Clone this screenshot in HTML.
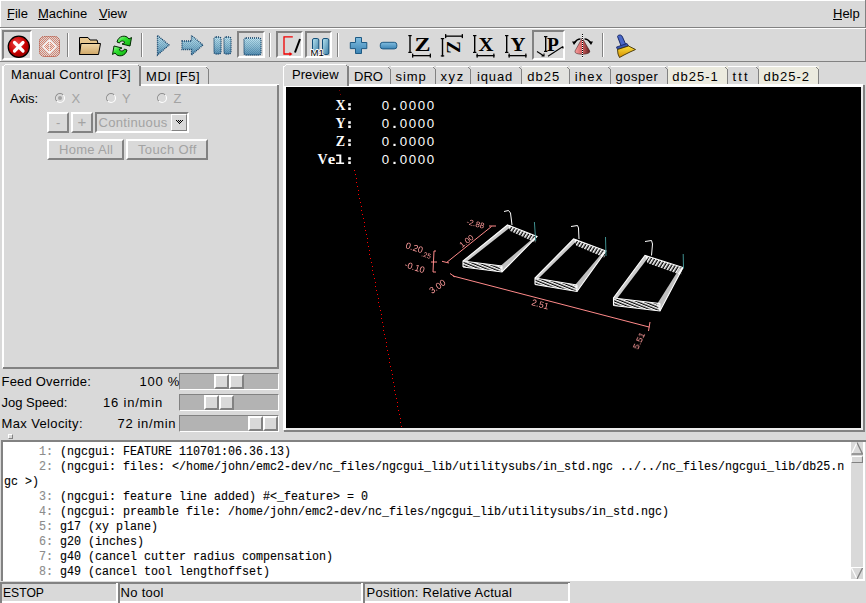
<!DOCTYPE html>
<html><head><meta charset="utf-8"><style>
*{margin:0;padding:0;box-sizing:border-box}
html,body{width:866px;height:603px;overflow:hidden;background:#d9d9d9}
body{position:relative;font-family:"Liberation Sans",sans-serif;font-size:13px;color:#000}
.a{position:absolute}
.t{position:absolute;white-space:pre;line-height:15px;height:15px}
.dk{background:#828282}
.wh{background:#ffffff}
.sunk{position:absolute;border-style:solid;border-width:2px;border-color:#828282 #fff #fff #828282}
.rais{position:absolute;border-style:solid;border-width:2px;border-color:#fff #828282 #828282 #fff}
.dis{color:#a3a3a3}
.mono{font-family:"Liberation Mono",monospace;font-size:12px;-webkit-text-stroke:0.12px;transform:scaleX(0.97222);transform-origin:0 0}
.ln{color:#8c8c8c}
</style></head><body>
<div class="a" style="left:0px;top:0px;width:866px;height:1px;background:#ffffff;"></div>
<div class="a" style="left:0px;top:0px;width:1px;height:27px;background:#ffffff;"></div>
<div class="a" style="left:865px;top:0px;width:1px;height:28px;background:#828282;"></div>
<div class="a" style="left:0px;top:27px;width:866px;height:1px;background:#828282;"></div>
<div class="t " style="left:7px;top:6px;">File</div>
<div class="a" style="left:7px;top:19px;width:7px;height:1px;background:#000;"></div>
<div class="t " style="left:38px;top:6px;">Machine</div>
<div class="a" style="left:38px;top:19px;width:10px;height:1px;background:#000;"></div>
<div class="t " style="left:99px;top:6px;">View</div>
<div class="a" style="left:99px;top:19px;width:8px;height:1px;background:#000;"></div>
<div class="t " style="left:833px;top:6px;">Help</div>
<div class="a" style="left:833px;top:19px;width:9px;height:1px;background:#000;"></div>
<div class="a" style="left:0px;top:28px;width:866px;height:1px;background:#ffffff;"></div>
<div class="a" style="left:0px;top:28px;width:1px;height:33px;background:#ffffff;"></div>
<div class="a" style="left:865px;top:29px;width:1px;height:33px;background:#828282;"></div>
<div class="a" style="left:0px;top:61px;width:866px;height:1px;background:#828282;"></div>
<div class="sunk" style="left:2px;top:30px;width:30px;height:30px"></div>
<div class="sunk" style="left:237px;top:31px;width:28px;height:27px"></div>
<div class="sunk" style="left:276px;top:31px;width:27px;height:27px"></div>
<div class="sunk" style="left:305px;top:31px;width:27px;height:27px"></div>
<div class="sunk" style="left:532px;top:30px;width:33px;height:30px"></div>
<svg class="a" style="left:0;top:0" width="866" height="62" viewBox="0 0 866 62">
<defs>
<radialGradient id="gred" cx="0.4" cy="0.35" r="0.7"><stop offset="0" stop-color="#f04848"/><stop offset="0.6" stop-color="#c80000"/><stop offset="1" stop-color="#8a0000"/></radialGradient>
<linearGradient id="gblue" x1="0" y1="0" x2="0" y2="1"><stop offset="0" stop-color="#c0e4f0"/><stop offset="0.5" stop-color="#90c0d6"/><stop offset="1" stop-color="#5890b4"/></linearGradient><pattern id="bchk" width="2" height="2" patternUnits="userSpaceOnUse"><rect width="1" height="1" fill="#1c5478" fill-opacity="0.25"/><rect x="1" y="1" width="1" height="1" fill="#1c5478" fill-opacity="0.25"/></pattern>
<linearGradient id="gbar" x1="0" y1="0" x2="1" y2="1"><stop offset="0" stop-color="#b8e4f0"/><stop offset="1" stop-color="#3a7ca4"/></linearGradient>
<linearGradient id="gplus" x1="0" y1="0" x2="0" y2="1"><stop offset="0" stop-color="#80bde0"/><stop offset="1" stop-color="#3c84b4"/></linearGradient>
<linearGradient id="gfold" x1="0" y1="0" x2="0" y2="1"><stop offset="0" stop-color="#f2d8a8"/><stop offset="1" stop-color="#d0a868"/></linearGradient>
<linearGradient id="ggreen" x1="0" y1="0" x2="1" y2="1"><stop offset="0" stop-color="#b0ffb0"/><stop offset="0.4" stop-color="#30e030"/><stop offset="1" stop-color="#10b010"/></linearGradient>
<linearGradient id="gcone" x1="0" y1="0" x2="1" y2="0"><stop offset="0" stop-color="#f8a0a0"/><stop offset="0.5" stop-color="#d06060"/><stop offset="1" stop-color="#602020"/></linearGradient>
<linearGradient id="gbrush" x1="0" y1="0" x2="0" y2="1"><stop offset="0" stop-color="#f8e040"/><stop offset="1" stop-color="#d89000"/></linearGradient>
<pattern id="dots" width="2" height="2" patternUnits="userSpaceOnUse"><rect width="1" height="1" fill="#d88470"/><rect x="1" y="1" width="1" height="1" fill="#d88470"/></pattern>
</defs>
<!-- separators -->
<g>
<rect x="67" y="33" width="1" height="24" fill="#828282"/><rect x="68" y="33" width="1" height="24" fill="#fff"/>
<rect x="141" y="33" width="1" height="24" fill="#828282"/><rect x="142" y="33" width="1" height="24" fill="#fff"/>
<rect x="269" y="33" width="1" height="24" fill="#828282"/><rect x="270" y="33" width="1" height="24" fill="#fff"/>
<rect x="337" y="33" width="1" height="24" fill="#828282"/><rect x="338" y="33" width="1" height="24" fill="#fff"/>
<rect x="602" y="33" width="1" height="24" fill="#828282"/><rect x="603" y="33" width="1" height="24" fill="#fff"/>
</g>
<!-- estop -->
<circle cx="18.8" cy="46.8" r="10.6" fill="url(#gred)" stroke="#000" stroke-width="1.2"/>
<path d="M14.5 42.5 L23 51 M23 42.5 L14.5 51" stroke="#fff" stroke-width="3.2" stroke-linecap="round"/>
<!-- power -->
<rect x="39" y="36" width="21" height="21" rx="5" fill="url(#dots)"/>
<rect x="39.5" y="36.5" width="20" height="20" rx="5" fill="none" stroke="#b05848" stroke-width="1" stroke-dasharray="1 1"/>
<path d="M49.5 40 L56 46.5 L49.5 53 L43 46.5 Z" fill="none" stroke="#fff" stroke-width="1.3" opacity="0.9"/>
<path d="M49.5 42.5 L53.5 46.5 L49.5 50.5 L45.5 46.5 Z" fill="none" stroke="#fbe6dc" stroke-width="1" opacity="0.8"/>
<path d="M49.5 41 L49.5 52" stroke="#fff" stroke-width="1" stroke-dasharray="1 1" opacity="0.8"/>
<!-- folder -->
<path d="M79.5 37.5 L88 37.5 L90 40 L97 40 L98 43.5 L81 43.5 L79.5 54.5 Z" fill="#e8c890" stroke="#000" stroke-width="1"/>
<path d="M81 43.5 L100.5 43.5 L98.5 54.5 L79.5 54.5 Z" fill="url(#gfold)" stroke="#000" stroke-width="1"/>
<!-- reload -->
<path d="M117 42 C118 36 126 34 129 39 L131.5 37.5 L130 46 L122 44 L125 42.5 C123 40 120 41 119.5 43 Z" fill="url(#ggreen)" stroke="#002a00" stroke-width="1"/>
<path d="M127 50 C126 56 118 58 115 53 L112.5 54.5 L114 46 L122 48 L119 49.5 C121 52 124 51 124.5 49 Z" fill="url(#ggreen)" stroke="#002a00" stroke-width="1"/>
<!-- play -->
<path d="M157.5 35.5 L169 45 L157.5 55 Z" fill="url(#gblue)" stroke="#0e3e66" stroke-width="1.3" stroke-dasharray="1 1"/><path d="M157.5 35.5 L169 45 L157.5 55 Z" fill="url(#bchk)"/>
<!-- step -->
<path d="M182 41 L191.5 41 L191.5 35.5 L203 45 L191.5 55 L191.5 49.5 L182 49.5 Z" fill="url(#gblue)" stroke="#0e3e66" stroke-width="1.3" stroke-dasharray="1 1"/><path d="M182 41 L191.5 41 L191.5 35.5 L203 45 L191.5 55 L191.5 49.5 L182 49.5 Z" fill="url(#bchk)"/>
<!-- pause -->
<rect x="214" y="37" width="7" height="17" rx="2" fill="url(#gblue)" stroke="#0e3e66" stroke-width="1.3" stroke-dasharray="1 1"/><rect x="214" y="37" width="7" height="17" rx="2" fill="url(#bchk)"/>
<rect x="224" y="37" width="7" height="17" rx="2" fill="url(#gblue)" stroke="#0e3e66" stroke-width="1.3" stroke-dasharray="1 1"/><rect x="224" y="37" width="7" height="17" rx="2" fill="url(#bchk)"/>
<!-- stop -->
<rect x="244" y="38" width="17" height="17" rx="2" fill="url(#gblue)" stroke="#0e3e66" stroke-width="1.3" stroke-dasharray="1 1"/><rect x="244" y="38" width="17" height="17" rx="2" fill="url(#bchk)"/>
<!-- block delete -->
<path d="M292.8 36.8 L284 36.8 L284 54 L290 54" fill="none" stroke="#f00000" stroke-width="1.3"/>
<path d="M289.5 52 L292.5 54 L289.5 56 Z" fill="#f00000"/>
<path d="M300 39 L295 52.5" stroke="#000" stroke-width="2"/>
<!-- M1 -->
<rect x="312.5" y="38.5" width="6.3" height="16" rx="1.5" fill="url(#gbar)" stroke="#14507a" stroke-width="1"/>
<rect x="322.5" y="38.5" width="6.3" height="16" rx="1.5" fill="url(#gbar)" stroke="#14507a" stroke-width="1"/>
<text x="310.5" y="56" font-family="Liberation Sans" font-size="9.6" fill="#000" stroke="#fff" stroke-width="2" stroke-linejoin="round" paint-order="stroke" opacity="0.99">M1</text>
<!-- plus -->
<path d="M355.5 37.5 L361.5 37.5 L361.5 42.5 L366.8 42.5 L366.8 48.6 L361.5 48.6 L361.5 53.5 L355.5 53.5 L355.5 48.6 L350.3 48.6 L350.3 42.5 L355.5 42.5 Z" fill="url(#gplus)" stroke="#1e5a84" stroke-width="1" stroke-linejoin="round"/>
<!-- minus -->
<rect x="380.3" y="42.3" width="16.5" height="6.6" rx="2.5" fill="url(#gplus)" stroke="#1e5a84" stroke-width="1"/>
<!-- Z -->
<g font-family="Liberation Serif" font-weight="bold" fill="#000">
<g fill="#000"><rect x="409.3" y="35" width="1.4" height="18"/><rect x="408.3" y="35" width="3.4" height="1.2"/><rect x="408.3" y="51.8" width="3.4" height="1.2"/><rect x="412" y="55" width="19" height="1.3"/><rect x="412" y="53.6" width="1.3" height="4"/><rect x="429.7" y="53.6" width="1.3" height="4"/><rect x="441.8" y="38" width="1.4" height="18.5"/><rect x="440.8" y="38" width="3.4" height="1.2"/><rect x="440.8" y="55.3" width="3.4" height="1.2"/><rect x="445" y="35.5" width="18" height="1.3"/><rect x="445" y="34.1" width="1.3" height="4"/><rect x="461.7" y="34.1" width="1.3" height="4"/><rect x="474" y="35" width="1.4" height="18"/><rect x="473" y="35" width="3.4" height="1.2"/><rect x="473" y="51.8" width="3.4" height="1.2"/><rect x="476.5" y="55" width="18.0" height="1.3"/><rect x="476.5" y="53.6" width="1.3" height="4"/><rect x="493.2" y="53.6" width="1.3" height="4"/><rect x="506" y="35" width="1.4" height="18"/><rect x="505" y="35" width="3.4" height="1.2"/><rect x="505" y="51.8" width="3.4" height="1.2"/><rect x="508.5" y="55" width="18.0" height="1.3"/><rect x="508.5" y="53.6" width="1.3" height="4"/><rect x="525.2" y="53.6" width="1.3" height="4"/><rect x="545" y="36" width="1.4" height="16"/><rect x="544" y="36" width="3.4" height="1.2"/><rect x="544" y="50.8" width="3.4" height="1.2"/></g>
<text transform="translate(414.5,51.3) scale(1.3,1)" font-size="18.5">Z</text>
<text transform="translate(453.5,46.5) scale(1.05,0.85) rotate(90) translate(-6.5,6) scale(1.2,1)" font-size="18.5">Z</text>
<text transform="translate(478.5,51.3) scale(1.12,1)" font-size="18.5">X</text>
<text transform="translate(510.5,51.3) scale(1.12,1)" font-size="18.5">Y</text>
<text transform="translate(547,51.3) scale(1.05,1)" font-size="18.5">P</text>
<path d="M537 51.5 L544 56 M541.5 56 L544 56 L544 53.5 M548 56.2 L563 46.5 M563 46.5 L563 48.5" stroke="#000" stroke-width="1.1" fill="none"/>
</g>
<!-- cone -->
<path d="M582.2 38 L589.8 51 Q590.5 54 582.2 54.3 Q574 54 575 51 Z" fill="url(#gcone)" stroke="#301010" stroke-width="0.5"/>
<g shape-rendering="crispEdges"><rect x="582" y="34" width="1" height="1" fill="#000"/><rect x="582" y="35" width="1" height="1" fill="#fff"/><rect x="582" y="36" width="1" height="1" fill="#000"/><rect x="582" y="37" width="1" height="1" fill="#fff"/><rect x="582" y="38" width="1" height="1" fill="#000"/><rect x="582" y="39" width="1" height="1" fill="#fff"/><rect x="582" y="40" width="1" height="1" fill="#000"/><rect x="582" y="41" width="1" height="1" fill="#fff"/><rect x="582" y="42" width="1" height="1" fill="#000"/><rect x="582" y="43" width="1" height="1" fill="#fff"/><rect x="582" y="44" width="1" height="1" fill="#000"/><rect x="582" y="45" width="1" height="1" fill="#fff"/><rect x="582" y="46" width="1" height="1" fill="#000"/><rect x="582" y="47" width="1" height="1" fill="#fff"/><rect x="582" y="48" width="1" height="1" fill="#000"/><rect x="582" y="49" width="1" height="1" fill="#fff"/><rect x="582" y="50" width="1" height="1" fill="#000"/><rect x="582" y="51" width="1" height="1" fill="#fff"/><rect x="582" y="52" width="1" height="1" fill="#000"/><rect x="582" y="53" width="1" height="1" fill="#fff"/><rect x="582" y="54" width="1" height="1" fill="#000"/><rect x="582" y="55" width="1" height="1" fill="#fff"/><rect x="582" y="56" width="1" height="1" fill="#000"/><rect x="582" y="57" width="1" height="1" fill="#fff"/></g>

<path d="M574.5 42.5 Q577 39 580.5 38.8 M584.5 38.8 Q588 39 590.5 42.5" stroke="#000" stroke-width="1.3" fill="none"/>
<path d="M572 41.5 L576.5 41.5 L574 45 Z M593 41.5 L588.5 41.5 L591 45 Z" fill="#000"/>
<!-- brush -->
<path d="M617.5 36.5 Q618 34.5 620.5 35 Q622 35.5 622.5 37 L626 45 L621.5 47 Z" fill="#4a68c8" stroke="#102060" stroke-width="0.9"/>
<path d="M616.5 47 L627 43.5 L628.5 46 L617.5 49.5 Z" fill="#3a58b0" stroke="#102060" stroke-width="0.8"/>
<path d="M617.5 49.5 L628.5 46 L635.5 49.5 L630 52 L624 55 L619.5 57.5 L618 54 Z" fill="url(#gbrush)" stroke="#403000" stroke-width="0.9"/>
</svg>
<div class="a" style="left:2px;top:84px;width:277px;height:2px;background:#ffffff;"></div>
<div class="a" style="left:2px;top:66px;width:2px;height:302px;background:#ffffff;"></div>
<div class="a" style="left:277px;top:85px;width:1px;height:283px;background:#828282;"></div>
<div class="a" style="left:278px;top:85px;width:1px;height:283px;background:#828282;"></div>
<div class="a" style="left:3px;top:367px;width:276px;height:1px;background:#828282;"></div>
<div class="a" style="left:3px;top:368px;width:276px;height:1px;background:#828282;"></div>
<div class="a" style="left:141px;top:66px;width:68px;height:18px;background:#d9d9d9;"></div>
<div class="a" style="left:141px;top:66px;width:66px;height:1px;background:#ffffff;"></div>
<div class="a" style="left:206px;top:67px;width:1px;height:1px;background:#828282;"></div>
<div class="a" style="left:207px;top:68px;width:1px;height:1px;background:#828282;"></div>
<div class="a" style="left:208px;top:69px;width:1px;height:15px;background:#828282;"></div>
<div class="t " style="left:146px;top:69px;letter-spacing:0.55px;">MDI [F5]</div>
<div class="a" style="left:2px;top:64px;width:139px;height:22px;background:#d9d9d9;"></div>
<div class="a" style="left:5px;top:64px;width:133px;height:1px;background:#ffffff;"></div>
<div class="a" style="left:4px;top:65px;width:1px;height:1px;background:#ffffff;"></div>
<div class="a" style="left:3px;top:66px;width:1px;height:1px;background:#ffffff;"></div>
<div class="a" style="left:2px;top:66px;width:2px;height:20px;background:#ffffff;"></div>
<div class="a" style="left:138px;top:65px;width:1px;height:1px;background:#828282;"></div>
<div class="a" style="left:139px;top:66px;width:2px;height:20px;background:#828282;"></div>
<div class="t " style="left:11px;top:67px;letter-spacing:0.3px;">Manual Control [F3]</div>
<div class="a" style="left:4px;top:84px;width:134px;height:2px;background:#d9d9d9;"></div>
<div class="t " style="left:10px;top:91px;">Axis:</div>
<svg class="a" style="left:53.6px;top:92px" width="12" height="12"><circle cx="6" cy="6" r="4.5" fill="#d9d9d9" stroke="#fff" stroke-width="1.1"/><path d="M2.8 9.2 A4.5 4.5 0 0 1 9.2 2.8" fill="none" stroke="#8c8c8c" stroke-width="1.1"/><circle cx="6" cy="6" r="2" fill="#a3a3a3"/></svg>
<div class="t dis" style="left:71.5px;top:91px;">X</div>
<svg class="a" style="left:104.8px;top:92px" width="12" height="12"><circle cx="6" cy="6" r="4.5" fill="#d9d9d9" stroke="#fff" stroke-width="1.1"/><path d="M2.8 9.2 A4.5 4.5 0 0 1 9.2 2.8" fill="none" stroke="#8c8c8c" stroke-width="1.1"/></svg>
<div class="t dis" style="left:122px;top:91px;">Y</div>
<svg class="a" style="left:155.7px;top:92px" width="12" height="12"><circle cx="6" cy="6" r="4.5" fill="#d9d9d9" stroke="#fff" stroke-width="1.1"/><path d="M2.8 9.2 A4.5 4.5 0 0 1 9.2 2.8" fill="none" stroke="#8c8c8c" stroke-width="1.1"/></svg>
<div class="t dis" style="left:173.5px;top:91px;">Z</div>
<div class="rais" style="left:47px;top:112px;width:22px;height:21px"></div>
<div class="t dis" style="left:56px;top:115px;">-</div>
<div class="rais" style="left:71px;top:112px;width:22px;height:21px"></div>
<div class="t dis" style="left:77.5px;top:114px;font-size:15px;">+</div>
<div class="sunk" style="left:95px;top:112px;width:94px;height:21px"></div>
<div class="t dis" style="left:98.5px;top:115px;letter-spacing:0.33px;">Continuous</div>
<div class="rais" style="left:171px;top:114px;width:16px;height:17px;border-width:1px"></div>
<svg class="a" style="left:175px;top:119px" width="9" height="6" shape-rendering="crispEdges"><rect x="1" y="1" width="1" height="1" fill="#000"/><rect x="3" y="1" width="1" height="1" fill="#000"/><rect x="5" y="1" width="1" height="1" fill="#000"/><rect x="7" y="1" width="1" height="1" fill="#000"/><rect x="2" y="2" width="1" height="1" fill="#000"/><rect x="4" y="2" width="1" height="1" fill="#000"/><rect x="6" y="2" width="1" height="1" fill="#000"/><rect x="3" y="3" width="1" height="1" fill="#000"/><rect x="5" y="3" width="1" height="1" fill="#000"/><rect x="4" y="4" width="1" height="1" fill="#000"/></svg>
<div class="rais" style="left:47px;top:139px;width:77px;height:21px"></div>
<div class="t dis" style="left:59px;top:142px;letter-spacing:0.28px;">Home All</div>
<div class="rais" style="left:126px;top:139px;width:82px;height:21px"></div>
<div class="t dis" style="left:138px;top:142px;letter-spacing:0.37px;">Touch Off</div>
<div class="t " style="left:1.5px;top:374px;letter-spacing:0.2px;">Feed Override:</div>
<div class="t " style="left:139.5px;top:374px;letter-spacing:0.75px;">100 %</div>
<div class="sunk" style="left:179px;top:373px;width:100px;height:17px;background:#b3b3b3;border-width:1px"></div>
<div class="rais" style="left:214px;top:374px;width:15px;height:15px;background:#d9d9d9"></div>
<div class="rais" style="left:229px;top:374px;width:15px;height:15px;background:#d9d9d9"></div>
<div class="t " style="left:1.5px;top:395px;letter-spacing:0px;">Jog Speed:</div>
<div class="t " style="left:103px;top:395px;letter-spacing:0.8px;">16 in/min</div>
<div class="sunk" style="left:179px;top:394px;width:100px;height:17px;background:#b3b3b3;border-width:1px"></div>
<div class="rais" style="left:203.5px;top:395px;width:15px;height:15px;background:#d9d9d9"></div>
<div class="rais" style="left:218.5px;top:395px;width:15px;height:15px;background:#d9d9d9"></div>
<div class="t " style="left:1.5px;top:416px;letter-spacing:0.37px;">Max Velocity:</div>
<div class="t " style="left:117.5px;top:416px;letter-spacing:0.65px;">72 in/min</div>
<div class="sunk" style="left:179px;top:415px;width:100px;height:17px;background:#b3b3b3;border-width:1px"></div>
<div class="rais" style="left:248px;top:416px;width:15px;height:15px;background:#d9d9d9"></div>
<div class="rais" style="left:263px;top:416px;width:15px;height:15px;background:#d9d9d9"></div>
<div class="rais" style="left:8px;top:434px;width:5px;height:5px;border-width:1px;background:#d9d9d9"></div>
<div class="a" style="left:283px;top:84px;width:580px;height:3px;background:#ffffff;"></div>
<div class="a" style="left:283px;top:84px;width:3px;height:346px;background:#ffffff;"></div>
<div class="a" style="left:286px;top:428px;width:577px;height:2px;background:#ececec;"></div>
<div class="a" style="left:861px;top:87px;width:2px;height:343px;background:#ececec;"></div>
<div class="a" style="left:863px;top:85px;width:2px;height:347px;background:#828282;"></div>
<div class="a" style="left:284px;top:430px;width:581px;height:2px;background:#828282;"></div>
<div class="a" style="left:286px;top:87px;width:575px;height:341px;background:#000;"></div>
<div class="a" style="left:349px;top:66px;width:42px;height:18px;background:#d9d9d9;"></div>
<div class="a" style="left:349px;top:66px;width:40px;height:1px;background:#ffffff;"></div>
<div class="a" style="left:388px;top:67px;width:1px;height:1px;background:#828282;"></div>
<div class="a" style="left:389px;top:68px;width:1px;height:1px;background:#828282;"></div>
<div class="a" style="left:390px;top:69px;width:1px;height:15px;background:#828282;"></div>
<div class="t " style="left:354px;top:69px;letter-spacing:0px;">DRO</div>
<div class="a" style="left:391px;top:66px;width:45px;height:18px;background:#d9d9d9;"></div>
<div class="a" style="left:391px;top:66px;width:43px;height:1px;background:#ffffff;"></div>
<div class="a" style="left:433px;top:67px;width:1px;height:1px;background:#828282;"></div>
<div class="a" style="left:434px;top:68px;width:1px;height:1px;background:#828282;"></div>
<div class="a" style="left:435px;top:69px;width:1px;height:15px;background:#828282;"></div>
<div class="t " style="left:395.5px;top:69px;letter-spacing:0.9px;">simp</div>
<div class="a" style="left:436px;top:66px;width:35px;height:18px;background:#d9d9d9;"></div>
<div class="a" style="left:436px;top:66px;width:33px;height:1px;background:#ffffff;"></div>
<div class="a" style="left:468px;top:67px;width:1px;height:1px;background:#828282;"></div>
<div class="a" style="left:469px;top:68px;width:1px;height:1px;background:#828282;"></div>
<div class="a" style="left:470px;top:69px;width:1px;height:15px;background:#828282;"></div>
<div class="t " style="left:440.5px;top:69px;letter-spacing:1.6px;">xyz</div>
<div class="a" style="left:471px;top:66px;width:51px;height:18px;background:#d9d9d9;"></div>
<div class="a" style="left:471px;top:66px;width:49px;height:1px;background:#ffffff;"></div>
<div class="a" style="left:519px;top:67px;width:1px;height:1px;background:#828282;"></div>
<div class="a" style="left:520px;top:68px;width:1px;height:1px;background:#828282;"></div>
<div class="a" style="left:521px;top:69px;width:1px;height:15px;background:#828282;"></div>
<div class="t " style="left:477px;top:69px;letter-spacing:0.85px;">iquad</div>
<div class="a" style="left:522px;top:66px;width:48px;height:18px;background:#e2e2de;"></div>
<div class="a" style="left:522px;top:66px;width:46px;height:1px;background:#ffffff;"></div>
<div class="a" style="left:567px;top:67px;width:1px;height:1px;background:#828282;"></div>
<div class="a" style="left:568px;top:68px;width:1px;height:1px;background:#828282;"></div>
<div class="a" style="left:569px;top:69px;width:1px;height:15px;background:#828282;"></div>
<div class="t " style="left:527.3px;top:69px;letter-spacing:1.0px;">db25</div>
<div class="a" style="left:570px;top:66px;width:41px;height:18px;background:#d9d9d9;"></div>
<div class="a" style="left:570px;top:66px;width:39px;height:1px;background:#ffffff;"></div>
<div class="a" style="left:608px;top:67px;width:1px;height:1px;background:#828282;"></div>
<div class="a" style="left:609px;top:68px;width:1px;height:1px;background:#828282;"></div>
<div class="a" style="left:610px;top:69px;width:1px;height:15px;background:#828282;"></div>
<div class="t " style="left:574.7px;top:69px;letter-spacing:1.2px;">ihex</div>
<div class="a" style="left:611px;top:66px;width:57px;height:18px;background:#d9d9d9;"></div>
<div class="a" style="left:611px;top:66px;width:55px;height:1px;background:#ffffff;"></div>
<div class="a" style="left:665px;top:67px;width:1px;height:1px;background:#828282;"></div>
<div class="a" style="left:666px;top:68px;width:1px;height:1px;background:#828282;"></div>
<div class="a" style="left:667px;top:69px;width:1px;height:15px;background:#828282;"></div>
<div class="t " style="left:615.5px;top:69px;letter-spacing:0.5px;">gosper</div>
<div class="a" style="left:668px;top:66px;width:60px;height:18px;background:#ecebdf;"></div>
<div class="a" style="left:668px;top:66px;width:58px;height:1px;background:#ffffff;"></div>
<div class="a" style="left:725px;top:67px;width:1px;height:1px;background:#828282;"></div>
<div class="a" style="left:726px;top:68px;width:1px;height:1px;background:#828282;"></div>
<div class="a" style="left:727px;top:69px;width:1px;height:15px;background:#828282;"></div>
<div class="t " style="left:672.3px;top:69px;letter-spacing:1.0px;">db25-1</div>
<div class="a" style="left:728px;top:66px;width:31px;height:18px;background:#d9d9d9;"></div>
<div class="a" style="left:728px;top:66px;width:29px;height:1px;background:#ffffff;"></div>
<div class="a" style="left:756px;top:67px;width:1px;height:1px;background:#828282;"></div>
<div class="a" style="left:757px;top:68px;width:1px;height:1px;background:#828282;"></div>
<div class="a" style="left:758px;top:69px;width:1px;height:15px;background:#828282;"></div>
<div class="t " style="left:732.5px;top:69px;letter-spacing:2.1px;">ttt</div>
<div class="a" style="left:759px;top:66px;width:60px;height:18px;background:#ecebdf;"></div>
<div class="a" style="left:759px;top:66px;width:58px;height:1px;background:#ffffff;"></div>
<div class="a" style="left:816px;top:67px;width:1px;height:1px;background:#828282;"></div>
<div class="a" style="left:817px;top:68px;width:1px;height:1px;background:#828282;"></div>
<div class="a" style="left:818px;top:69px;width:1px;height:15px;background:#828282;"></div>
<div class="t " style="left:763.5px;top:69px;letter-spacing:1.0px;">db25-2</div>
<div class="a" style="left:283px;top:64px;width:66px;height:22px;background:#d9d9d9;"></div>
<div class="a" style="left:286px;top:64px;width:60px;height:1px;background:#ffffff;"></div>
<div class="a" style="left:285px;top:65px;width:1px;height:1px;background:#ffffff;"></div>
<div class="a" style="left:284px;top:66px;width:1px;height:1px;background:#ffffff;"></div>
<div class="a" style="left:283px;top:66px;width:1px;height:20px;background:#ffffff;"></div>
<div class="a" style="left:346px;top:65px;width:1px;height:1px;background:#828282;"></div>
<div class="a" style="left:347px;top:66px;width:2px;height:20px;background:#828282;"></div>
<div class="t " style="left:292px;top:67px;letter-spacing:0.05px;">Preview</div>
<div class="a" style="left:286px;top:84px;width:60px;height:2px;background:#d9d9d9;"></div>
<svg class="a" style="left:286px;top:87px" width="575" height="341" viewBox="286 87 575 341"><defs>
<pattern id="hatchA" width="3" height="3" patternUnits="userSpaceOnUse" patternTransform="rotate(-58)"><rect width="3" height="1.6" fill="#fff"/></pattern>
<pattern id="hatchB" width="3" height="2.6" patternUnits="userSpaceOnUse" patternTransform="rotate(22)"><rect width="3" height="1.4" fill="#fff"/></pattern>
<pattern id="chk" width="2" height="2" patternUnits="userSpaceOnUse"><rect width="1" height="1" fill="#fff"/><rect x="1" y="1" width="1" height="1" fill="#fff"/></pattern>
</defs><rect x="354" y="170" width="1" height="1" fill="#ff0000" shape-rendering="crispEdges"/><rect x="355" y="174" width="1" height="1" fill="#ff0000" shape-rendering="crispEdges"/><rect x="356" y="178" width="1" height="1" fill="#ff0000" shape-rendering="crispEdges"/><rect x="356" y="182" width="1" height="1" fill="#ff0000" shape-rendering="crispEdges"/><rect x="357" y="186" width="1" height="1" fill="#ff0000" shape-rendering="crispEdges"/><rect x="358" y="190" width="1" height="1" fill="#ff0000" shape-rendering="crispEdges"/><rect x="358" y="194" width="1" height="1" fill="#ff0000" shape-rendering="crispEdges"/><rect x="359" y="198" width="1" height="1" fill="#ff0000" shape-rendering="crispEdges"/><rect x="360" y="202" width="1" height="1" fill="#ff0000" shape-rendering="crispEdges"/><rect x="361" y="206" width="1" height="1" fill="#ff0000" shape-rendering="crispEdges"/><rect x="361" y="210" width="1" height="1" fill="#ff0000" shape-rendering="crispEdges"/><rect x="362" y="214" width="1" height="1" fill="#ff0000" shape-rendering="crispEdges"/><rect x="363" y="218" width="1" height="1" fill="#ff0000" shape-rendering="crispEdges"/><rect x="364" y="222" width="1" height="1" fill="#ff0000" shape-rendering="crispEdges"/><rect x="364" y="226" width="1" height="1" fill="#ff0000" shape-rendering="crispEdges"/><rect x="365" y="230" width="1" height="1" fill="#ff0000" shape-rendering="crispEdges"/><rect x="366" y="234" width="1" height="1" fill="#ff0000" shape-rendering="crispEdges"/><rect x="367" y="238" width="1" height="1" fill="#ff0000" shape-rendering="crispEdges"/><rect x="367" y="242" width="1" height="1" fill="#ff0000" shape-rendering="crispEdges"/><rect x="368" y="246" width="1" height="1" fill="#ff0000" shape-rendering="crispEdges"/><rect x="369" y="250" width="1" height="1" fill="#ff0000" shape-rendering="crispEdges"/><rect x="369" y="254" width="1" height="1" fill="#ff0000" shape-rendering="crispEdges"/><rect x="370" y="258" width="1" height="1" fill="#ff0000" shape-rendering="crispEdges"/><rect x="371" y="262" width="1" height="1" fill="#ff0000" shape-rendering="crispEdges"/><rect x="372" y="266" width="1" height="1" fill="#ff0000" shape-rendering="crispEdges"/><rect x="372" y="270" width="1" height="1" fill="#ff0000" shape-rendering="crispEdges"/><rect x="373" y="274" width="1" height="1" fill="#ff0000" shape-rendering="crispEdges"/><rect x="374" y="278" width="1" height="1" fill="#ff0000" shape-rendering="crispEdges"/><rect x="375" y="282" width="1" height="1" fill="#ff0000" shape-rendering="crispEdges"/><rect x="375" y="286" width="1" height="1" fill="#ff0000" shape-rendering="crispEdges"/><rect x="376" y="290" width="1" height="1" fill="#ff0000" shape-rendering="crispEdges"/><rect x="377" y="294" width="1" height="1" fill="#ff0000" shape-rendering="crispEdges"/><rect x="378" y="298" width="1" height="1" fill="#ff0000" shape-rendering="crispEdges"/><rect x="378" y="302" width="1" height="1" fill="#ff0000" shape-rendering="crispEdges"/><rect x="379" y="306" width="1" height="1" fill="#ff0000" shape-rendering="crispEdges"/><rect x="380" y="310" width="1" height="1" fill="#ff0000" shape-rendering="crispEdges"/><rect x="381" y="314" width="1" height="1" fill="#ff0000" shape-rendering="crispEdges"/><rect x="381" y="318" width="1" height="1" fill="#ff0000" shape-rendering="crispEdges"/><rect x="382" y="322" width="1" height="1" fill="#ff0000" shape-rendering="crispEdges"/><rect x="383" y="326" width="1" height="1" fill="#ff0000" shape-rendering="crispEdges"/><rect x="383" y="330" width="1" height="1" fill="#ff0000" shape-rendering="crispEdges"/><rect x="384" y="334" width="1" height="1" fill="#ff0000" shape-rendering="crispEdges"/><rect x="385" y="338" width="1" height="1" fill="#ff0000" shape-rendering="crispEdges"/><rect x="386" y="342" width="1" height="1" fill="#ff0000" shape-rendering="crispEdges"/><rect x="386" y="346" width="1" height="1" fill="#ff0000" shape-rendering="crispEdges"/><rect x="387" y="350" width="1" height="1" fill="#ff0000" shape-rendering="crispEdges"/><rect x="388" y="354" width="1" height="1" fill="#ff0000" shape-rendering="crispEdges"/><rect x="389" y="358" width="1" height="1" fill="#ff0000" shape-rendering="crispEdges"/><rect x="389" y="362" width="1" height="1" fill="#ff0000" shape-rendering="crispEdges"/><rect x="390" y="366" width="1" height="1" fill="#ff0000" shape-rendering="crispEdges"/><rect x="391" y="370" width="1" height="1" fill="#ff0000" shape-rendering="crispEdges"/><rect x="392" y="374" width="1" height="1" fill="#ff0000" shape-rendering="crispEdges"/><rect x="392" y="378" width="1" height="1" fill="#ff0000" shape-rendering="crispEdges"/><rect x="393" y="382" width="1" height="1" fill="#ff0000" shape-rendering="crispEdges"/><rect x="394" y="386" width="1" height="1" fill="#ff0000" shape-rendering="crispEdges"/><rect x="394" y="390" width="1" height="1" fill="#ff0000" shape-rendering="crispEdges"/><rect x="395" y="394" width="1" height="1" fill="#ff0000" shape-rendering="crispEdges"/><rect x="396" y="398" width="1" height="1" fill="#ff0000" shape-rendering="crispEdges"/><rect x="397" y="402" width="1" height="1" fill="#ff0000" shape-rendering="crispEdges"/><rect x="397" y="406" width="1" height="1" fill="#ff0000" shape-rendering="crispEdges"/><rect x="398" y="410" width="1" height="1" fill="#ff0000" shape-rendering="crispEdges"/><rect x="399" y="414" width="1" height="1" fill="#ff0000" shape-rendering="crispEdges"/><rect x="400" y="418" width="1" height="1" fill="#ff0000" shape-rendering="crispEdges"/><rect x="400" y="422" width="1" height="1" fill="#ff0000" shape-rendering="crispEdges"/><rect x="401" y="426" width="1" height="1" fill="#ff0000" shape-rendering="crispEdges"/><rect x="339" y="90" width="1" height="1" fill="#800000"/><rect x="340" y="94" width="1" height="1" fill="#800000"/><polygon points="507.5,225.0 537.0,236.5 535.2,242.5 510.2,231.0" fill="url(#hatchA)"/><polygon points="463.0,261.0 502.0,266.0 502.0,272.0 463.0,267.0" fill="url(#hatchB)"/><polygon points="463.0,261.0 507.5,225.0 512.0,226.0 467.5,261.0" fill="#fff" fill-opacity="0.8"/><polygon points="537.0,236.5 502.0,272.0 499.0,267.2 534.0,237.5" fill="#fff" fill-opacity="0.75"/><polyline points="463.0,267.0 463.0,261.0 507.5,225.0 537.0,236.5 502.0,272.0 463.0,267.0" fill="none" stroke="#fff" stroke-width="1.1"/><polyline points="463.0,261.0 502.0,266.0 502.0,272.0" fill="none" stroke="#fff" stroke-width="1"/><polygon points="573.6,239.0 606.0,251.0 604.2,257.5 576.0,245.5" fill="url(#hatchA)"/><polygon points="535.0,278.0 577.0,285.0 577.0,291.5 535.0,284.5" fill="url(#hatchB)"/><polygon points="535.0,278.0 573.6,239.0 577.6,240.0 539.0,278.0" fill="#fff" fill-opacity="0.8"/><polygon points="606.0,251.0 577.0,291.5 574.0,286.3 603.0,252.0" fill="#fff" fill-opacity="0.75"/><polyline points="535.0,284.5 535.0,278.0 573.6,239.0 606.0,251.0 577.0,291.5 535.0,284.5" fill="none" stroke="#fff" stroke-width="1.1"/><polyline points="535.0,278.0 577.0,285.0 577.0,291.5" fill="none" stroke="#fff" stroke-width="1"/><polygon points="645.0,255.5 683.0,267.5 680.9,275.0 647.4,263.0" fill="url(#hatchA)"/><polygon points="613.5,298.0 660.0,303.5 660.0,311.0 613.5,305.5" fill="url(#hatchB)"/><polygon points="613.5,298.0 645.0,255.5 649.0,256.5 617.5,298.0" fill="#fff" fill-opacity="0.8"/><polygon points="683.0,267.5 660.0,311.0 656.5,305.0 679.5,268.5" fill="#fff" fill-opacity="0.75"/><polyline points="613.5,305.5 613.5,298.0 645.0,255.5 683.0,267.5 660.0,311.0 613.5,305.5" fill="none" stroke="#fff" stroke-width="1.1"/><polyline points="613.5,298.0 660.0,303.5 660.0,311.0" fill="none" stroke="#fff" stroke-width="1"/><polyline points="504,211.5 508.5,210.5 510.5,213 512,225" fill="none" stroke="#fff" stroke-width="1"/><polyline points="571,226.5 577.5,225.5 578.5,228 579,239" fill="none" stroke="#fff" stroke-width="1"/><polyline points="645,241.5 651.5,240.5 652.5,244 651.5,255.5" fill="none" stroke="#fff" stroke-width="1"/><line x1="534.4" y1="222" x2="535.7" y2="241" stroke="#3f9090" stroke-width="1"/><line x1="605.5" y1="237" x2="606" y2="256" stroke="#3f9090" stroke-width="1"/><line x1="683.2" y1="254" x2="683.5" y2="268.5" stroke="#3f9090" stroke-width="1"/><g stroke="#ff8a8a" stroke-width="1" fill="none"><line x1="447" y1="262.2" x2="491.5" y2="226.5"/><line x1="442" y1="261.3" x2="449" y2="263"/><line x1="489" y1="226" x2="496" y2="226"/><line x1="453" y1="276" x2="649.4" y2="327.1"/><line x1="450" y1="273.5" x2="455" y2="277"/><line x1="650" y1="322" x2="648.5" y2="331"/><path d="M436 251 L434 251 L433 272 L436 272 M431 262 L437 262"/></g><g fill="#ff9c9c" font-family="Liberation Sans" font-size="9" opacity="0.99"><text transform="translate(405,248) rotate(18)">0.20</text><text transform="translate(404,267) rotate(18)">-0.10</text><text transform="translate(466,224) rotate(15)" font-size="8">-2.88</text><text transform="translate(462,248) rotate(-38)" font-size="8">1.00</text><text transform="translate(432,294) rotate(-35)">3.00</text><text transform="translate(531,305) rotate(15)">2.51</text><text transform="translate(638,350) rotate(-65)">5.51</text><text transform="translate(421,256) rotate(18)" font-size="7">.25</text></g><g fill="#fff" opacity="0.99"><text x="340.5" y="110" text-anchor="middle" font-family="Liberation Serif" font-weight="bold" font-size="14">X</text><rect x="348.2" y="103.2" width="2.6" height="2.6" /><rect x="348.2" y="107.4" width="2.6" height="2.6"/><text x="385.5" y="110" text-anchor="middle" font-family="Liberation Sans" font-size="13.3">0</text><rect x="393.4" y="107.8" width="2.2" height="2.2"/><text x="403.5" y="110" text-anchor="middle" font-family="Liberation Sans" font-size="13.3">0</text><text x="412.5" y="110" text-anchor="middle" font-family="Liberation Sans" font-size="13.3">0</text><text x="421.5" y="110" text-anchor="middle" font-family="Liberation Sans" font-size="13.3">0</text><text x="430.5" y="110" text-anchor="middle" font-family="Liberation Sans" font-size="13.3">0</text><text x="340.5" y="128" text-anchor="middle" font-family="Liberation Serif" font-weight="bold" font-size="14">Y</text><rect x="348.2" y="121.2" width="2.6" height="2.6" /><rect x="348.2" y="125.4" width="2.6" height="2.6"/><text x="385.5" y="128" text-anchor="middle" font-family="Liberation Sans" font-size="13.3">0</text><rect x="393.4" y="125.8" width="2.2" height="2.2"/><text x="403.5" y="128" text-anchor="middle" font-family="Liberation Sans" font-size="13.3">0</text><text x="412.5" y="128" text-anchor="middle" font-family="Liberation Sans" font-size="13.3">0</text><text x="421.5" y="128" text-anchor="middle" font-family="Liberation Sans" font-size="13.3">0</text><text x="430.5" y="128" text-anchor="middle" font-family="Liberation Sans" font-size="13.3">0</text><text x="340.5" y="146" text-anchor="middle" font-family="Liberation Serif" font-weight="bold" font-size="14">Z</text><rect x="348.2" y="139.2" width="2.6" height="2.6" /><rect x="348.2" y="143.4" width="2.6" height="2.6"/><text x="385.5" y="146" text-anchor="middle" font-family="Liberation Sans" font-size="13.3">0</text><rect x="393.4" y="143.8" width="2.2" height="2.2"/><text x="403.5" y="146" text-anchor="middle" font-family="Liberation Sans" font-size="13.3">0</text><text x="412.5" y="146" text-anchor="middle" font-family="Liberation Sans" font-size="13.3">0</text><text x="421.5" y="146" text-anchor="middle" font-family="Liberation Sans" font-size="13.3">0</text><text x="430.5" y="146" text-anchor="middle" font-family="Liberation Sans" font-size="13.3">0</text><text x="322.5" y="164" text-anchor="middle" font-family="Liberation Serif" font-weight="bold" font-size="14">V</text><text transform="translate(331.5,164) scale(1.2,1)" text-anchor="middle" font-family="Liberation Serif" font-weight="bold" font-size="14">e</text><path d="M336.2 154.4 L341.3 154.4 L341.3 162.4 L344.1 162.4 L344.1 164 L336.0 164 L336.0 162.4 L339.3 162.4 L339.3 156.0 L336.2 156.0 Z"/><rect x="348.2" y="157.2" width="2.6" height="2.6" /><rect x="348.2" y="161.4" width="2.6" height="2.6"/><text x="385.5" y="164" text-anchor="middle" font-family="Liberation Sans" font-size="13.3">0</text><rect x="393.4" y="161.8" width="2.2" height="2.2"/><text x="403.5" y="164" text-anchor="middle" font-family="Liberation Sans" font-size="13.3">0</text><text x="412.5" y="164" text-anchor="middle" font-family="Liberation Sans" font-size="13.3">0</text><text x="421.5" y="164" text-anchor="middle" font-family="Liberation Sans" font-size="13.3">0</text><text x="430.5" y="164" text-anchor="middle" font-family="Liberation Sans" font-size="13.3">0</text></g></svg>
<div class="a" style="left:1px;top:440px;width:865px;height:2px;background:#828282;"></div>
<div class="a" style="left:1px;top:440px;width:2px;height:141px;background:#828282;"></div>
<div class="a" style="left:3px;top:442px;width:862px;height:139px;background:#ffffff;"></div>
<div class="a" style="left:0px;top:581px;width:866px;height:1px;background:#d9d9d9;"></div>
<div class="t mono" style="left:4px;top:445px;"><span class="ln">     1: </span>(ngcgui: FEATURE 110701:06.36.13)</div>
<div class="t mono" style="left:4px;top:460px;"><span class="ln">     2: </span>(ngcgui: files: &lt;/home/john/emc2-dev/nc_files/ngcgui_lib/utilitysubs/in_std.ngc ../../nc_files/ngcgui_lib/db25.n</div>
<div class="t mono" style="left:4px;top:475px;">gc &gt;)</div>
<div class="t mono" style="left:4px;top:490px;"><span class="ln">     3: </span>(ngcgui: feature line added) #&lt;_feature&gt; = 0</div>
<div class="t mono" style="left:4px;top:505px;"><span class="ln">     4: </span>(ngcgui: preamble file: /home/john/emc2-dev/nc_files/ngcgui_lib/utilitysubs/in_std.ngc)</div>
<div class="t mono" style="left:4px;top:520px;"><span class="ln">     5: </span>g17 (xy plane)</div>
<div class="t mono" style="left:4px;top:535px;"><span class="ln">     6: </span>g20 (inches)</div>
<div class="t mono" style="left:4px;top:550px;"><span class="ln">     7: </span>g40 (cancel cutter radius compensation)</div>
<div class="t mono" style="left:4px;top:565px;"><span class="ln">     8: </span>g49 (cancel tool lengthoffset)</div>
<div class="a" style="left:851px;top:442px;width:12px;height:137px;background:#d9d9d9;"></div>
<svg class="a" style="left:851px;top:442px" width="12" height="139"><path d="M0.5 12 L6 0.5" stroke="#fff" stroke-width="1.2"/><path d="M6 0.5 L11.5 12 L0.5 12" fill="none" stroke="#828282" stroke-width="1.3"/><path d="M0.5 21 L0.5 14.5 L11.5 14.5" fill="none" stroke="#fff" stroke-width="1"/><path d="M11.5 14.5 L11.5 20.5 L0.5 20.5" fill="none" stroke="#828282" stroke-width="1.2"/><rect x="0" y="125" width="12" height="1" fill="#fff"/><path d="M0.5 126 L6 137" stroke="#fff" stroke-width="1.2"/><path d="M11.5 126 L6 137" stroke="#828282" stroke-width="1.4"/></svg>
<div class="a" style="left:851px;top:579px;width:12px;height:2px;background:#ffffff;"></div>
<div class="a" style="left:863px;top:442px;width:2px;height:139px;background:#ffffff;"></div>
<div class="a" style="left:0px;top:601px;width:570px;height:2px;background:#ffffff;"></div>
<div class="a" style="left:0px;top:582px;width:118px;height:2px;background:#828282;"></div>
<div class="a" style="left:0px;top:582px;width:2px;height:21px;background:#828282;"></div>
<div class="a" style="left:116px;top:583px;width:2px;height:20px;background:#ffffff;"></div>
<div class="t " style="left:2.5px;top:585px;letter-spacing:0px;transform:scaleX(0.935);transform-origin:0 0;">ESTOP</div>
<div class="a" style="left:118px;top:582px;width:245px;height:2px;background:#828282;"></div>
<div class="a" style="left:118px;top:582px;width:2px;height:21px;background:#828282;"></div>
<div class="a" style="left:361px;top:583px;width:2px;height:20px;background:#ffffff;"></div>
<div class="t " style="left:120.5px;top:585px;letter-spacing:0.3px;">No tool</div>
<div class="a" style="left:363px;top:582px;width:207px;height:2px;background:#828282;"></div>
<div class="a" style="left:363px;top:582px;width:2px;height:21px;background:#828282;"></div>
<div class="a" style="left:568px;top:583px;width:2px;height:20px;background:#ffffff;"></div>
<div class="t " style="left:366.5px;top:585px;letter-spacing:0.25px;">Position: Relative Actual</div>
</body></html>
